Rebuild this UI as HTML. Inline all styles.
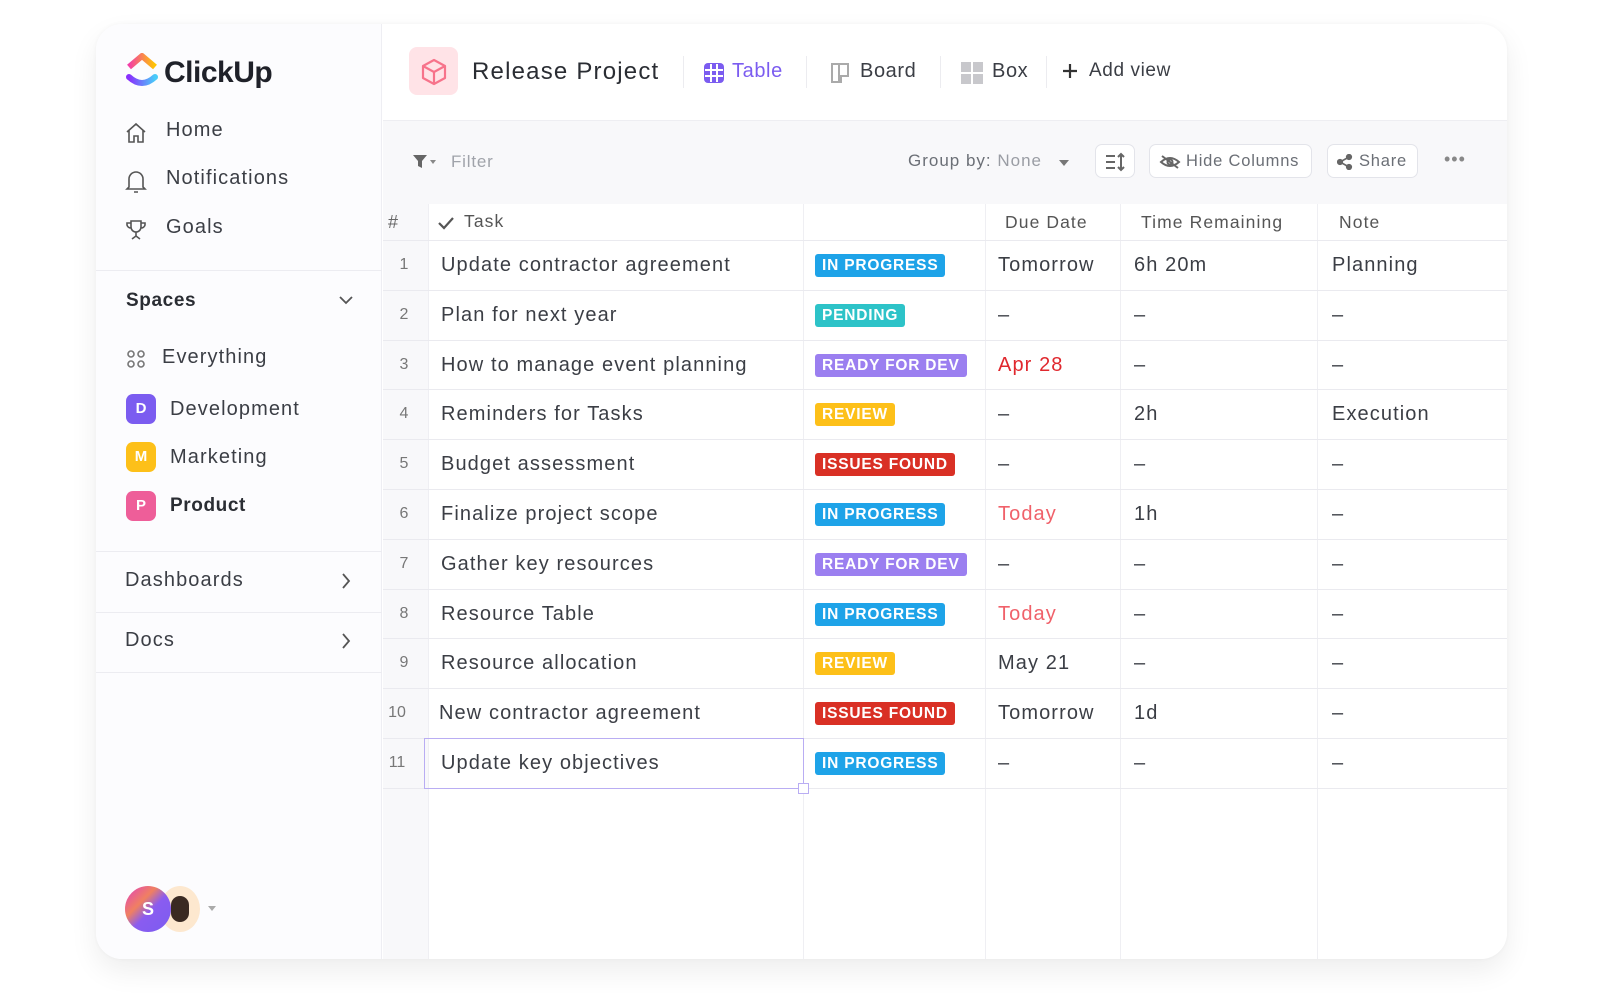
<!DOCTYPE html>
<html><head><meta charset="utf-8"><style>
*{box-sizing:border-box;margin:0;padding:0}
body{width:1600px;height:1004px;background:#fff;font-family:"Liberation Sans",sans-serif;color:#292d34;position:relative;overflow:hidden}
.a{position:absolute;white-space:nowrap}
.card{position:absolute;left:96px;top:24px;width:1411px;height:935px;border-radius:26px;background:#fff;box-shadow:0 12px 28px rgba(0,0,0,.07),0 0 4px rgba(0,0,0,.04);overflow:hidden}
.side{position:absolute;left:0;top:0;width:286px;height:100%;background:#fcfcfe;border-right:1px solid #eeeef3}
.hl{position:absolute;left:0;width:286px;height:1px;background:#ececf1}
.nav{font-size:20px;color:#3b3e45;letter-spacing:1.1px}
.sp{width:30px;height:30px;border-radius:7px;color:#fff;font-weight:bold;font-size:15px;text-align:center;line-height:30px}
.badge{position:absolute;height:23px;line-height:23px;padding:0 7px;border-radius:3px;color:#fff;font-weight:bold;font-size:15.5px;letter-spacing:.8px}
.ip{background:#1ea3e8}.pe{background:#2dc3c8}.rd{background:#9b7ff0}.rv{background:#fdc019}.is{background:#d93025}
.t{font-size:20px;color:#3b3e45;letter-spacing:1.1px}
.th{font-size:17.5px;color:#555;letter-spacing:1.1px}
.btn{position:absolute;border:1px solid #e3e4ea;border-radius:7px;background:#fff;font-size:16.5px;color:#6b6f76;letter-spacing:.8px}
</style></head><body>
<div class="card">
 <div class="side">
  <svg class="a" style="left:30px;top:29px" width="32" height="36" viewBox="0 0 32 36">
   <defs><linearGradient id="g1" x1="0" x2="1"><stop offset="0" stop-color="#f33ea9"/><stop offset="1" stop-color="#ffc700"/></linearGradient>
   <linearGradient id="g2" x1="0" x2="1"><stop offset="0" stop-color="#8930fd"/><stop offset="1" stop-color="#49ccf9"/></linearGradient></defs>
   <path d="M3 14 L16 3 L29 14" stroke="url(#g1)" stroke-width="6" fill="none" stroke-linejoin="round"/>
   <path d="M3 24 Q16 36 29 24" stroke="url(#g2)" stroke-width="6" fill="none" stroke-linecap="round"/>
  </svg>
  <div class="a" style="left:68px;top:32px;font-size:30px;font-weight:bold;color:#1f2129;letter-spacing:-.5px">ClickUp</div>
  <svg class="a" style="left:28px;top:97px" width="24" height="24" viewBox="0 0 24 24" fill="none" stroke="#555" stroke-width="1.6"><path d="M3 11 L12 3 L21 11 M5 9 V21 H10 V15 H14 V21 H19 V9"/></svg>
  <div class="a nav" style="left:70px;top:95px">Home</div>
  <svg class="a" style="left:28px;top:144px" width="24" height="26" viewBox="0 0 24 26" fill="none" stroke="#555" stroke-width="1.6"><path d="M5 19 V11 A7 7 0 0 1 19 11 V19 L21 21 H3 Z M10 24 H14"/></svg>
  <div class="a nav" style="left:70px;top:143px">Notifications</div>
  <svg class="a" style="left:28px;top:194px" width="24" height="24" viewBox="0 0 24 24" fill="none" stroke="#555" stroke-width="1.6"><path d="M7 3 H17 V9 A5 5 0 0 1 7 9 Z M7 5 H3 V7 A4 4 0 0 0 7 10 M17 5 H21 V7 A4 4 0 0 1 17 10 M12 14 V18 M8 21 L12 18 L16 21"/></svg>
  <div class="a nav" style="left:70px;top:192px">Goals</div>
  <div class="hl" style="top:246px"></div>
  <div class="a" style="left:30px;top:266px;font-size:19px;font-weight:bold;color:#2a2d33;letter-spacing:.6px">Spaces</div>
  <svg class="a" style="left:242px;top:270px" width="16" height="12" viewBox="0 0 16 12" fill="none" stroke="#555" stroke-width="1.8"><path d="M2 3 L8 9 L14 3"/></svg>
  <svg class="a" style="left:30px;top:325px" width="20" height="20" viewBox="0 0 20 20" fill="none" stroke="#777" stroke-width="1.6"><circle cx="5" cy="5" r="3"/><circle cx="15" cy="5" r="3"/><circle cx="5" cy="15" r="3"/><circle cx="15" cy="15" r="3"/></svg>
  <div class="a nav" style="left:66px;top:322px">Everything</div>
  <div class="a sp" style="left:30px;top:370px;background:#7b5cf0">D</div>
  <div class="a nav" style="left:74px;top:374px">Development</div>
  <div class="a sp" style="left:30px;top:418px;background:#fdc019">M</div>
  <div class="a nav" style="left:74px;top:422px">Marketing</div>
  <div class="a sp" style="left:30px;top:467px;background:#ee5e99">P</div>
  <div class="a nav" style="left:74px;top:471px;font-weight:bold;color:#2a2d33;font-size:19px;letter-spacing:.6px">Product</div>
  <div class="hl" style="top:527px"></div>
  <div class="a nav" style="left:29px;top:545px">Dashboards</div>
  <svg class="a" style="left:244px;top:548px" width="12" height="18" viewBox="0 0 12 18" fill="none" stroke="#555" stroke-width="1.8"><path d="M3 2 L9 9 L3 16"/></svg>
  <div class="hl" style="top:588px"></div>
  <div class="a nav" style="left:29px;top:605px">Docs</div>
  <svg class="a" style="left:244px;top:608px" width="12" height="18" viewBox="0 0 12 18" fill="none" stroke="#555" stroke-width="1.8"><path d="M3 2 L9 9 L3 16"/></svg>
  <div class="hl" style="top:648px"></div>
  <div class="a" style="left:64px;top:862px;width:40px;height:46px;border-radius:50%;background:#fde8cf;overflow:hidden"><div style="position:absolute;left:11px;top:10px;width:18px;height:26px;border-radius:9px;background:#3a2a22"></div></div>
  <div class="a" style="left:29px;top:862px;width:46px;height:46px;border-radius:50%;background:linear-gradient(135deg,#e040c0 0%,#f08060 35%,#8a5cf0 55%,#7b5cf0 100%);color:#fff;font-weight:bold;font-size:18px;text-align:center;line-height:46px">S</div>
  <div class="a" style="left:112px;top:882px;border:4px solid transparent;border-top:5px solid #aaa"></div>
 </div>
 <div class="a" style="left:313px;top:23px;width:49px;height:48px;border-radius:8px;background:#ffe3e7"></div>
 <svg class="a" style="left:325px;top:34px" width="26" height="28" viewBox="0 0 26 28" fill="none" stroke="#f7738b" stroke-width="2.2" stroke-linejoin="round"><path d="M13 2 L24 8 V20 L13 26 L2 20 V8 Z M2 8 L13 14 L24 8 M13 14 V26"/></svg>
 <div class="a" style="left:376px;top:34px;font-size:24px;color:#2a2d33;letter-spacing:1.2px">Release Project</div>
 <div class="a" style="left:587px;top:32px;width:1px;height:32px;background:#ececf0"></div>
 <svg class="a" style="left:607px;top:38px" width="22" height="22" viewBox="0 0 22 22"><rect x="1" y="1" width="20" height="20" rx="4" fill="#7b5cf0"/><path d="M2 8 H20 M2 14 H20 M8 2 V20 M14 2 V20" stroke="#fff" stroke-width="2"/></svg>
 <div class="a" style="left:636px;top:36px;font-size:20px;color:#7b5cf0;letter-spacing:.6px">Table</div>
 <div class="a" style="left:710px;top:32px;width:1px;height:32px;background:#ececf0"></div>
 <svg class="a" style="left:734px;top:38px" width="20" height="22" viewBox="0 0 20 22" fill="none" stroke="#aaa" stroke-width="2"><path d="M2 2 H18 V14 H11 V20 H2 Z M9 2 V20"/></svg>
 <div class="a" style="left:764px;top:36px;font-size:20px;color:#3b3e45;letter-spacing:.6px">Board</div>
 <div class="a" style="left:844px;top:32px;width:1px;height:32px;background:#ececf0"></div>
 <svg class="a" style="left:865px;top:38px" width="22" height="22" viewBox="0 0 22 22" fill="#c8c8cc"><rect x="0" y="0" width="10" height="10"/><rect x="12" y="0" width="10" height="10"/><rect x="0" y="12" width="10" height="10"/><rect x="12" y="12" width="10" height="10"/></svg>
 <div class="a" style="left:896px;top:36px;font-size:20px;color:#3b3e45;letter-spacing:.6px">Box</div>
 <div class="a" style="left:950px;top:32px;width:1px;height:32px;background:#ececf0"></div>
 <svg class="a" style="left:966px;top:39px" width="16" height="16" viewBox="0 0 16 16" stroke="#333" stroke-width="2.2"><path d="M8 1 V15 M1 8 H15"/></svg>
 <div class="a" style="left:993px;top:36px;font-size:19px;color:#3b3e45;letter-spacing:.6px">Add view</div>
 <div class="a" style="left:287px;top:96px;width:1131px;height:84px;background:#f8f8fa;border-top:1px solid #eeeef2"></div>
 <svg class="a" style="left:316px;top:130px" width="26" height="16" viewBox="0 0 26 16"><path d="M1 1 H15 L10 7 V14 L6 12 V7 Z" fill="#666"/><path d="M18 6 H24 L21 10 Z" fill="#888"/></svg>
 <div class="a" style="left:355px;top:128px;font-size:17px;color:#a0a3aa;letter-spacing:.8px">Filter</div>
 <div class="a" style="left:812px;top:127px;font-size:17px;color:#6b6f76;letter-spacing:1px">Group by: <span style="color:#9a9da4">None</span></div>
 <div class="a" style="left:963px;top:136px;border:5px solid transparent;border-top:6px solid #777"></div>
 <div class="btn" style="left:999px;top:120px;width:40px;height:34px"><svg style="position:absolute;left:9px;top:7px" width="22" height="20" viewBox="0 0 22 20" stroke="#666" stroke-width="2" fill="none"><path d="M1 4 H10 M1 10 H10 M1 16 H10 M16 2 V18 M13 5 L16 2 L19 5 M13 15 L16 18 L19 15"/></svg></div>
 <div class="btn" style="left:1053px;top:120px;width:163px;height:34px"><svg style="position:absolute;left:9px;top:9px" width="22" height="16" viewBox="0 0 22 16" stroke="#666" stroke-width="2" fill="none"><path d="M2 8 Q11 0 20 8 Q11 16 2 8 Z M3 2 L19 14"/><circle cx="11" cy="8" r="2.5"/></svg><span style="position:absolute;left:36px;top:7px">Hide Columns</span></div>
 <div class="btn" style="left:1231px;top:120px;width:91px;height:34px"><svg style="position:absolute;left:9px;top:9px" width="16" height="16" viewBox="0 0 16 16" fill="#666" stroke="#666" stroke-width="1.6"><circle cx="12" cy="3" r="2.3"/><circle cx="3" cy="8" r="2.3"/><circle cx="12" cy="13" r="2.3"/><path d="M12 3 L3 8 L12 13" fill="none"/></svg><span style="position:absolute;left:31px;top:7px">Share</span></div>
 <div class="a" style="left:1348px;top:125px;font-size:18px;color:#888;letter-spacing:1px">•••</div>
 <div class="a" style="left:287px;top:180px;width:1131px;height:760px;background:#fff"></div>
 <div class="a" style="left:287px;top:180px;width:45px;height:760px;background:#f8f8fa"></div>
 <div class="a" style="left:287px;top:180px;width:1131px;height:36px;background:#f8f8fa"></div>
 <div class="a" style="left:332px;top:180px;width:1086px;height:36px;background:#fff"></div>
 <div id="grid"></div>
 <div class="a" style="left:292px;top:188px;font-size:18px;color:#666">#</div>
 <svg class="a" style="left:342px;top:192px" width="16" height="14" viewBox="0 0 16 14" fill="none" stroke="#555" stroke-width="2.2"><path d="M1 7 L6 12 L15 2"/></svg>
 <div class="a th" style="left:368px;top:187px">Task</div>
 <div class="a th" style="left:909px;top:188px">Due Date</div>
 <div class="a th" style="left:1045px;top:188px">Time Remaining</div>
 <div class="a th" style="left:1243px;top:188px">Note</div>
 <div class="a" style="left:328px;top:714px;width:380px;height:51px;border:1.5px solid #b9adf3"></div>
 <div class="a" style="left:702px;top:759px;width:11px;height:11px;border:1.5px solid #b9adf3;background:#fff"></div>
</div>
<script>
var rows=[["Update contractor agreement","ip","IN PROGRESS","Tomorrow","6h 20m","Planning"],
["Plan for next year","pe","PENDING","–","–","–"],
["How to manage event planning","rd","READY FOR DEV","Apr 28","–","–"],
["Reminders for Tasks","rv","REVIEW","–","2h","Execution"],
["Budget assessment","is","ISSUES FOUND","–","–","–"],
["Finalize project scope","ip","IN PROGRESS","Today","1h","–"],
["Gather key resources","rd","READY FOR DEV","–","–","–"],
["Resource Table","ip","IN PROGRESS","Today","–","–"],
["Resource allocation","rv","REVIEW","May 21","–","–"],
["New contractor agreement","is","ISSUES FOUND","Tomorrow","1d","–"],
["Update key objectives","ip","IN PROGRESS","–","–","–"]];
var h="",top0=216,rh=49.8;
[332,707,889,1024,1221].forEach(function(x){h+='<div class="a" style="left:'+x+'px;top:180px;width:1px;height:760px;background:#efeff3"></div>'});
h+='<div class="a" style="left:287px;top:'+top0+'px;width:1131px;height:1px;background:#eaeaef"></div>';
rows.forEach(function(r,i){var y=top0+i*rh;
h+='<div class="a" style="left:287px;top:'+(y+rh)+'px;width:1131px;height:1px;background:#eaeaef"></div>';
h+='<div class="a" style="left:'+(i>8?290:297)+'px;top:'+(y+16)+'px;font-size:16px;color:#777;width:22px;text-align:center">'+(i+1)+'</div>';
h+='<div class="a t" style="left:'+(i==9?343:345)+'px;top:'+(y+14)+'px">'+r[0]+'</div>';
h+='<div class="badge '+r[1]+'" style="left:719px;top:'+(y+14)+'px">'+r[2]+'</div>';
var c=r[3]=="Apr 28"?"#e0282e":(r[3]=="Today"?"#f0616a":"#3b3e45");
h+='<div class="a t" style="left:902px;top:'+(y+14)+'px;color:'+c+'">'+r[3]+'</div>';
h+='<div class="a t" style="left:1038px;top:'+(y+14)+'px">'+r[4]+'</div>';
h+='<div class="a t" style="left:1236px;top:'+(y+14)+'px">'+r[5]+'</div>';});
document.getElementById("grid").outerHTML=h;
</script>
</body></html>
